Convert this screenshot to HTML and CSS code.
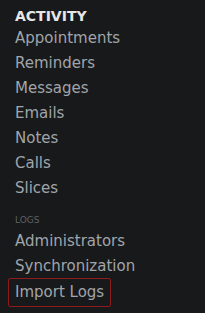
FILE: index.html
```html
<!DOCTYPE html>
<html lang="en">
<head>
    <meta charset="UTF-8">
    <meta name="viewport" content="width=device-width, initial-scale=1.0">
    <title>Activity</title>
    <link rel="stylesheet" href="styles.css">
</head>
<body>
    <nav class="sidebar">
        <h3 class="section-title">ACTIVITY</h3>
        <ul class="nav-list">
            <li><a href="#">Appointments</a></li>
            <li><a href="#">Reminders</a></li>
            <li><a href="#">Messages</a></li>
            <li><a href="#">Emails</a></li>
            <li><a href="#">Notes</a></li>
            <li><a href="#">Calls</a></li>
            <li><a href="#">Slices</a></li>
        </ul>
        <h4 class="section-label">LOGS</h4>
        <ul class="nav-list">
            <li><a href="#">Administrators</a></li>
            <li><a href="#">Synchronization</a></li>
            <li class="current"><a href="#">Import Logs</a></li>
        </ul>
    </nav>
</body>
</html>
```

FILE: styles.css
```css
body {
    margin: 0;
    padding: 0;
    background-color: #18191b;
    font-family: "DejaVu Sans", sans-serif;
}
.sidebar {
    padding: 7px 0 0 8px;
}
.section-title {
    margin: 0 0 1px 7px;
    font-size: 14px;
    font-weight: bold;
    color: #e6e6e6;
    line-height: 18px;
}
.section-label {
    margin: 12px 0 2px 7px;
    font-size: 9px;
    font-weight: normal;
    color: #5f6266;
    line-height: 14px;
}
.nav-list {
    list-style: none;
    margin: 0;
    padding: 0;
}
.nav-list li {
    height: 25px;
}
.nav-list a {
    display: block;
    width: fit-content;
    padding: 0 7px;
    line-height: 25px;
    font-size: 15px;
    color: #a0a5aa;
    text-decoration: none;
    border-radius: 2px;
}
.nav-list li.current {
    height: auto;
    margin-top: -1px;
}
.nav-list li.current a {
    line-height: 27px;
    padding: 0 6px;
    border: 1px solid #8e1b1b;
}
```
